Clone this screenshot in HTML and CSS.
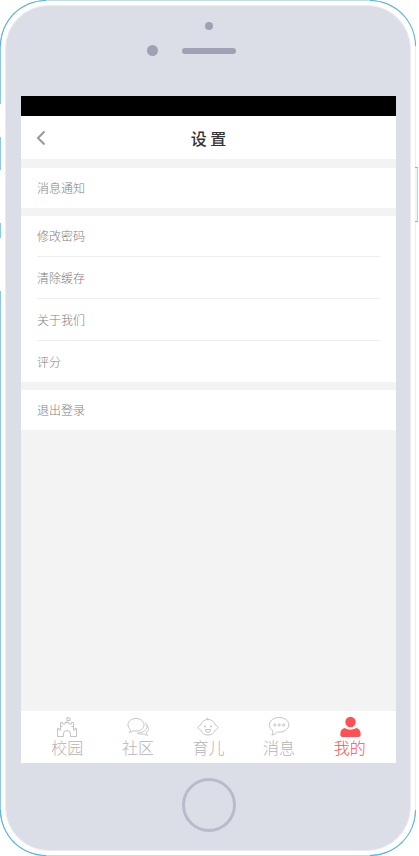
FILE: index.html
```html
<!DOCTYPE html>
<html lang="zh-CN">
<head>
<meta charset="utf-8">
<meta name="viewport" content="width=device-width, initial-scale=1">
<title>设置</title>
<link rel="stylesheet" href="styles.css">
</head>
<body>
<div class="phone">
  <i class="corner top-left"></i><i class="corner top-right"></i>
  <i class="corner bottom-left"></i><i class="corner bottom-right"></i>
  <i class="side mute"></i><i class="side volume-up"></i><i class="side volume-down"></i>
  <i class="power"></i>
  <div class="body">
    <div class="top">
      <i class="camera"></i>
      <div class="ear"><i class="sensor"></i><i class="speaker"></i></div>
    </div>
    <div class="screen">
      <div class="status"></div>
      <header class="header">
        <button class="back" type="button" aria-label="返回">
          <svg width="10" height="16" viewBox="0 0 10 16"><path d="M8.500 1.500L2 8l6.500 6.500" fill="none" stroke="#999" stroke-width="2"/></svg>
        </button>
        <h1>设 置</h1>
      </header>
      <main class="groups">
        <section class="group"><a class="row" href="#notice">消息通知</a></section>
        <section class="group">
          <a class="row" href="#password">修改密码</a>
          <a class="row" href="#cache">清除缓存</a>
          <a class="row" href="#about">关于我们</a>
          <a class="row" href="#rate">评分</a>
        </section>
        <section class="group"><a class="row" href="#logout">退出登录</a></section>
      </main>
      <nav class="tabs">
        <a class="tab" href="#campus">
          <svg viewBox="0 0 22 22"><path d="M1.500 20.500V12.500H3V14h1.500V6.500h2V8H9V6.500h4V8h2.500V6.500h2V14H19v-1.500h1.500v8h-6V18a3.500 3.500 0 0 0-7 0v2.500zM4.500 10.500h2M15.500 10.500h2M11 6.500V1M11 2h3v2.500h-3"/></svg>
          <span>校园</span></a>
        <a class="tab" href="#community">
          <svg viewBox="0 0 22 22"><path d="M9 2.500c4.700 0 8 2.700 8 6.300s-3.300 6.300-8 6.300c-1.100 0-2-.1-2.900-.4-1 .9-2.200 1.400-3.600 1.500.8-.9 1.100-1.800 1-2.800C1.800 12.200 1 10.600 1 8.800c0-3.600 3.300-6.300 8-6.300zM18 6.500c1.400 1 2 2.300 2 3.800 0 3.500-3.500 6.200-8.500 6.500M20 9.200c1 1 1.500 2 1.500 3.200 0 1.700-.8 3-2.200 4 0 1.200.3 2 1.200 2.900-1.500 0-2.600-.5-3.600-1.400-2.500.5-5 .2-6.900-1.100"/></svg>
          <span>社区</span></a>
        <a class="tab" href="#parenting">
          <svg viewBox="0 0 22 22"><path d="M11 3.500c3.500 0 6.500 2 7.300 5.500 1.300.5 2.700 1.400 2.700 2.500s-1.300 2-2.700 2.500c-1 3-3.800 5-7.300 5s-6.300-2-7.300-5C2.300 13.500 1 12.600 1 11.500S2.400 9.500 3.700 9C4.500 5.500 7.500 3.500 11 3.500zM11 3.500c-.9-.4-1-1.500 0-2M7 10.500h2M13 10.500h2M8 9.500v2M14 9.500v2M8.500 13.500h5v1.500c0 .8-1 1.200-2.500 1.200s-2.500-.4-2.500-1.200z"/></svg>
          <span>育儿</span></a>
        <a class="tab" href="#messages">
          <svg viewBox="0 0 22 22"><path d="M11.200 1.500c5.500 0 9.600 3.200 9.600 7.300s-4.100 7.300-9.600 7.300h-2c-1.500 1.800-3.300 2.700-5.400 2.900 1-1.300 1.400-2.600 1-4.200-2-1.300-3.300-3.500-3.300-6 0-4.100 4.200-7.300 9.700-7.300z"/><circle cx="6.800" cy="9" r="1.100"/><circle cx="11.200" cy="9" r="1.100"/><circle cx="15.600" cy="9" r="1.100"/></svg>
          <span>消息</span></a>
        <a class="tab active" href="#me" aria-current="page">
          <svg viewBox="0 0 22 22"><circle cx="11.500" cy="6" r="5.200"/><path d="M5.800 12c3.600 2.200 7.800 2.200 11.400 0 3 .5 4.500 3 4.500 6.300 0 1.700-.8 2.700-2.500 2.700H3.800c-1.700 0-2.500-1-2.500-2.700 0-3.300 1.500-5.800 4.500-6.300z"/></svg>
          <span>我的</span></a>
      </nav>
    </div>
    <button class="home" type="button" aria-label="主屏幕"></button>
  </div>
</div>
</body>
</html>
```
FILE: styles.css
```css
* { box-sizing: border-box; }

body {
  margin: 0;
  background: #fff;
  font-family: "Noto Sans CJK SC", sans-serif;
  font-weight: 300;
}

a { color: inherit; text-decoration: none; }
button { padding: 0; background: none; cursor: pointer; }

/* Phone shell */
.phone {
  position: relative;
  display: flex;
  min-height: 100vh;
  margin-right: 3px;
  padding: 4px;
  border: 1px solid;
  border-color: #c4dee7 #eee #c4dee7 #8ac8e6;
  border-radius: 46px;
}

.body {
  flex: 1;
  display: flex;
  flex-direction: column;
  padding: 0 14px 0 15px;
  border: 1px solid #ebedf1;
  border-radius: 44px;
  background: #dbdee6;
}

.corner {
  position: absolute;
  width: 46px;
  height: 46px;
  border: 0 solid #55b4dc;
}
.top-left { top: -1px; left: -1px; border-width: 1px 0 0 1px; border-top-left-radius: 46px; }
.top-right { top: -1px; right: -1px; border-width: 1px 1px 0 0; border-top-right-radius: 46px; }
.bottom-left { bottom: -1px; left: -1px; border-width: 0 0 1px 1px; border-bottom-left-radius: 46px; }
.bottom-right { bottom: -1px; right: -1px; border-width: 0 1px 1px 0; border-bottom-right-radius: 46px; }

.side {
  position: absolute;
  left: -1px;
  width: 1px;
  height: 53px;
  background: #fff;
}
.mute { top: 103px; height: 33px; }
.volume-up { top: 169px; }
.volume-down { top: 237px; }

.power {
  position: absolute;
  top: 166px;
  right: -3px;
  width: 3px;
  height: 55px;
  border: 1px solid #6ebad6;
  border-left: 0;
  border-right-color: #acd9e8;
  background: #eef6f8;
}

.top {
  display: flex;
  flex-direction: column;
  align-items: center;
  height: 90px;
  padding-top: 16px;
}
.top i { background: #a0a1b4; }
.camera { width: 8px; height: 8px; border-radius: 50%; }
.ear {
  display: flex;
  align-items: center;
  gap: 24px;
  margin-top: 15px;
  padding-right: 35px;
}
.sensor { width: 11px; height: 11px; border-radius: 50%; }
.speaker { width: 54px; height: 6px; border-radius: 3px; }

.home {
  align-self: center;
  width: 54px;
  height: 54px;
  margin: 15px 0 18px;
  border: 3px solid #b9bacb;
  border-radius: 50%;
}

/* Settings screen */
.screen {
  flex: 1;
  display: flex;
  flex-direction: column;
  background: #f3f3f3;
}
.status { height: 20px; background: #000; }
.header {
  display: grid;
  grid-template-columns: 40px 1fr 40px;
  align-items: center;
  height: 43px;
  background: #fff;
}
.back {
  display: flex;
  align-items: center;
  height: 43px;
  padding-left: 15px;
  border: 0;
}
h1 {
  margin: 0;
  color: #333;
  font-size: 16px;
  font-weight: 500;
  line-height: 22px;
  text-align: center;
}

.groups {
  flex: 1;
  display: flex;
  flex-direction: column;
  gap: 8px;
  padding-top: 9px;
}
.group { padding: 0 16px; background: #fff; }
.row {
  display: block;
  color: #808080;
  font-size: 12px;
  line-height: 40px;
}
.row + .row { border-top: 1px solid #eee; line-height: 41px; }

.tabs {
  display: flex;
  height: 52px;
  padding: 5px 11px 0;
  background: #fff;
}
.tab {
  flex: 1;
  display: flex;
  flex-direction: column;
  align-items: center;
  color: #b4b4b4;
  font-size: 16px;
  line-height: 18px;
}
.tab svg {
  width: 22px;
  height: 22px;
  fill: none;
  stroke: #c4c4c4;
  stroke-width: 1;
}
.tab.active { color: #ff5053; }
.tab.active svg { fill: #ff5053; stroke: none; }
```
